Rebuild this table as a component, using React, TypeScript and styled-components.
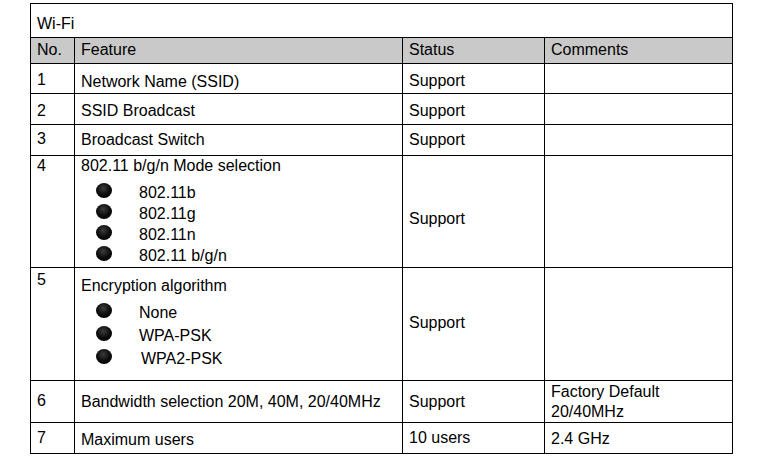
import React from "react";
import styled, { createGlobalStyle } from "styled-components";

const Global = createGlobalStyle`
  html, body { margin: 0; padding: 0; background: #ffffff; }
  body { font-family: "Liberation Sans", Arial, sans-serif; color: #000; }
`;

const Page = styled.div`
  padding: 3px 0 0 30px;
`;

const Sheet = styled.div`
  display: inline-grid;
  grid-template-columns: 43px 327px 141px 187px;
  grid-template-rows: 33px 25px 29px 30px 30px 111px 112px 41px 30px;
  gap: 1px;
  padding: 1px;
  background: #000;
`;

const Cell = styled.div<{ $pt?: number; $head?: boolean; $lh?: number }>`
  background: ${(p) => (p.$head ? "#c9c9c9" : "#ffffff")};
  padding: ${(p) => p.$pt ?? 0}px 4px 0 6px;
  font-size: 16px;
  line-height: ${(p) => p.$lh ?? 18}px;
  white-space: nowrap;
  overflow: hidden;
`;

const TitleCell = styled(Cell)`
  grid-column: 1 / -1;
`;

const BulletList = styled.ul<{ $mt: number; $ih: number }>`
  list-style: none;
  margin: ${(p) => p.$mt}px 0 0 0;
  padding: 0 0 0 15px;
  li {
    height: ${(p) => p.$ih}px;
  }
`;

const Item = styled.li`
  display: flex;
  align-items: center;
  gap: 27px;
`;

const Dot = styled.span`
  flex: none;
  width: 16px;
  height: 15px;
  margin-bottom: 4px;
  border-radius: 50%;
  background: radial-gradient(circle at 45% 35%, #3c3c3c 0%, #0c0c0c 50%, #000 100%);
`;

const Label = styled.span<{ $shift?: number }>`
  line-height: 18px;
  margin-left: ${(p) => p.$shift ?? 0}px;
`;

const modes = ["802.11b", "802.11g", "802.11n", "802.11 b/g/n"];
const ciphers = ["None", "WPA-PSK", "WPA2-PSK"];

export default function App() {
  return (
    <>
      <Global />
      <Page>
        <Sheet>
          <TitleCell $pt={11}>Wi-Fi</TitleCell>

          <Cell $head $pt={3}>No.</Cell>
          <Cell $head $pt={3}>Feature</Cell>
          <Cell $head $pt={3}>Status</Cell>
          <Cell $head $pt={3}>Comments</Cell>

          <Cell $pt={7}>1</Cell>
          <Cell $pt={9}>Network Name (SSID)</Cell>
          <Cell $pt={8}>Support</Cell>
          <Cell />

          <Cell $pt={8}>2</Cell>
          <Cell $pt={8}>SSID Broadcast</Cell>
          <Cell $pt={8}>Support</Cell>
          <Cell />

          <Cell $pt={5}>3</Cell>
          <Cell $pt={6}>Broadcast Switch</Cell>
          <Cell $pt={6}>Support</Cell>
          <Cell />

          <Cell $pt={1}>4</Cell>
          <Cell $pt={1}>
            802.11 b/g/n Mode selection
            <BulletList $mt={7} $ih={21}>
              {modes.map((m) => (
                <Item key={m}>
                  <Dot />
                  <Label>{m}</Label>
                </Item>
              ))}
            </BulletList>
          </Cell>
          <Cell $pt={54}>Support</Cell>
          <Cell />

          <Cell $pt={3}>5</Cell>
          <Cell $pt={9}>
            Encryption algorithm
            <BulletList $mt={6} $ih={23}>
              {ciphers.map((c, i) => (
                <Item key={c}>
                  <Dot />
                  <Label $shift={i === 2 ? 2 : 0}>{c}</Label>
                </Item>
              ))}
            </BulletList>
          </Cell>
          <Cell $pt={46}>Support</Cell>
          <Cell />

          <Cell $pt={11}>6</Cell>
          <Cell $pt={12}>Bandwidth selection 20M, 40M, 20/40MHz</Cell>
          <Cell $pt={12}>Support</Cell>
          <Cell $pt={1} $lh={20}>
            Factory Default
            <br />
            20/40MHz
          </Cell>

          <Cell $pt={6}>7</Cell>
          <Cell $pt={8}>Maximum users</Cell>
          <Cell $pt={6}>10 users</Cell>
          <Cell $pt={7}>2.4 GHz</Cell>
        </Sheet>
      </Page>
    </>
  );
}
